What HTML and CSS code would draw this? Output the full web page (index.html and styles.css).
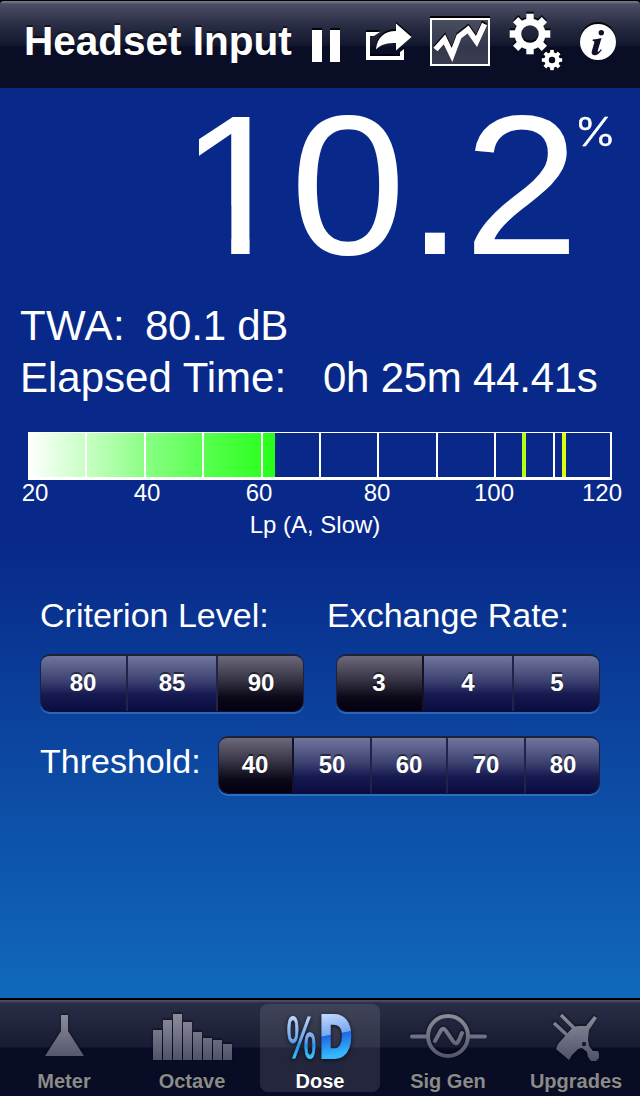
FILE: index.html
```html
<!DOCTYPE html>
<html lang="en">
<head>
<meta charset="utf-8">
<title>Headset Input</title>
<link rel="stylesheet" href="styles.css">
</head>
<body>
<div class="app">
  <header class="nav">
    <h1 class="title">Headset Input</h1>
    <svg class="tools" width="340" height="88" viewBox="300 0 340 88">
      <defs>
        <g id="teeth">
          <rect x="-3.7" y="-20.3" width="7.4" height="40.6"/>
          <rect x="-3.7" y="-20.3" width="7.4" height="40.6" transform="rotate(45)"/>
          <rect x="-3.7" y="-20.3" width="7.4" height="40.6" transform="rotate(90)"/>
          <rect x="-3.7" y="-20.3" width="7.4" height="40.6" transform="rotate(135)"/>
          <circle r="15.5"/>
        </g>
        <mask id="hole"><rect x="-22" y="-22" width="44" height="44" fill="#fff"/><circle r="8.7" fill="#000"/></mask>
        <mask id="hole2"><rect x="-22" y="-22" width="44" height="44" fill="#fff"/><circle r="6.4" fill="#000"/></mask>
        <linearGradient id="plot" x1="0" y1="0" x2="0" y2="1"><stop offset="0" stop-color="#4a4f60"/><stop offset=".6" stop-color="#35384c"/><stop offset="1" stop-color="#3a3b50"/></linearGradient>
      </defs>
      <g class="raised" fill="#fff">
        <path d="M312 30h10v32h-10zM330 30h10v32h-10z"/>
        <path d="M366 32h14l-6 4h-4v20h30v-4l4-3v11h-38z"/>
        <path d="M376 49.500C377 38 384 31 396 31v-7.500L411.500 37 396 50.500V43c-8 0-15 1-20 6.500z"/>
        <g transform="translate(530 34)"><g mask="url(#hole)"><use href="#teeth"/></g></g>
        <g transform="translate(552 60) scale(.5)"><g mask="url(#hole2)"><use href="#teeth"/></g></g>
        <circle cx="598" cy="42" r="18"/>
      </g>
      <path d="M430 16h60v2h-60z" fill="#000"/>
      <rect x="431" y="19" width="58" height="46" fill="url(#plot)" stroke="#fff" stroke-width="2"/>
      <path class="raised" d="M435.500 49.500L444.500 39.500 452 55 459 36.500 468 29.500 476.500 41.500 484.500 24" fill="none" stroke="#fff" stroke-width="5.500"/>
      <g fill="#0e1129"><circle cx="601.300" cy="32.800" r="2.700"/><path d="M592.800 39.600c2.800-.3 5.600-.8 8.700-1.600l-3.800 13c-.3 1.300.6 1.200 3.200-1.800l.9.800c-2.600 3.600-4.500 5.200-7 5.200-2.800 0-3.600-1.700-3-4l2.300-8c.5-1.800.2-2.300-1.500-2.300z"/></g>
    </svg>
  </header>

  <main class="content">
    <div class="reading"><span class="big"><span class="one">1</span>0.2</span><span class="unit">%</span></div>
    <div class="stats">
      <div class="row"><span class="twa">TWA:</span><span class="twav">80.1 dB</span></div>
      <div class="row"><span class="el">Elapsed Time:</span><span class="elv">0h 25m 44.41s</span></div>
    </div>
    <svg class="gauge" width="640" height="120" viewBox="0 430 640 120">
      <defs><linearGradient id="level"><stop offset="0" stop-color="#fff"/><stop offset=".25" stop-color="#c4ffc0"/><stop offset=".5" stop-color="#84ff7e"/><stop offset=".76" stop-color="#4fff46"/><stop offset="1" stop-color="#26ff19"/></linearGradient></defs>
      <rect x="28" y="432" width="247" height="46" fill="url(#level)"/>
      <path d="M28 432h584v1H28zM28 477h584v3H28zM85 432h2v46h-2zM144 432h2v46h-2zM202 432h2v46h-2zM261 432h2v46h-2zM319 432h2v46h-2zM377 432h2v46h-2zM436 432h2v46h-2zM494 432h2v46h-2zM553 432h2v46h-2zM610 432h2v46h-2zM28 432h1v46h-1z" fill="#fff"/>
      <path d="M522 433h4v44h-4z" fill="#b4ff12"/><path d="M562 433h4v44h-4z" fill="#deff0c"/>
      <g class="ticks"><text x="35" y="501">20</text><text x="147" y="501">40</text><text x="259" y="501">60</text><text x="377" y="501">80</text><text x="494" y="501">100</text><text x="602" y="501">120</text><text x="315" y="533">Lp (A, Slow)</text></g>
    </svg>
    <div class="settings">
      <section class="criterion"><h2>Criterion Level:</h2>
        <div class="seg seg3"><button>80</button><button>85</button><button class="on">90</button></div></section>
      <section class="exchange"><h2>Exchange Rate:</h2>
        <div class="seg seg3"><button class="on">3</button><button>4</button><button>5</button></div></section>
    </div>
    <section class="threshold"><h2>Threshold:</h2>
      <div class="seg seg5"><button class="on">40</button><button>50</button><button>60</button><button>70</button><button>80</button></div></section>
  </main>

  <nav class="tabs">
    <svg width="0" height="0" class="defs"><defs>
      <linearGradient id="metal" gradientUnits="userSpaceOnUse" x1="0" y1="10" x2="0" y2="60"><stop offset="0" stop-color="#92929f"/><stop offset="1" stop-color="#50526a"/></linearGradient>
      <linearGradient id="ice" gradientUnits="userSpaceOnUse" x1="0" y1="-44" x2="6" y2="0"><stop offset="0" stop-color="#c6dcff"/><stop offset=".52" stop-color="#78a8f0"/><stop offset=".54" stop-color="#1e66e8"/><stop offset="1" stop-color="#35b8fb"/></linearGradient>
      <linearGradient id="ice2" gradientUnits="userSpaceOnUse" x1="0" y1="-44" x2="0" y2="0"><stop offset="0" stop-color="#c6dcff"/><stop offset=".6" stop-color="#6ba5ee"/><stop offset=".72" stop-color="#2494f0"/><stop offset="1" stop-color="#3cc2fb"/></linearGradient>
    </defs></svg>
    <a class="tab"><svg width="120" height="62" viewBox="4 0 120 62"><path d="M61 15h7v16l16 25H45l16-25z" fill="url(#metal)"/></svg><span>Meter</span></a>
    <a class="tab"><svg width="120" height="62" viewBox="132 0 120 62"><path d="M153 30h9v30h-9zM163 20h9v40h-9zM173 14h9v46h-9zM183 22h9v38h-9zM193 32h9v28h-9zM203 38h9v22h-9zM213 40h9v20h-9zM223 44h9v16h-9z" fill="url(#metal)"/></svg><span>Octave</span></a>
    <a class="tab active"><svg width="120" height="62" viewBox="260 0 120 62"><g transform="translate(286.500 57.500) scale(.56 1)"><text class="pct">%</text></g><g transform="translate(320 57) scale(.73 1)"><text class="dee">D</text></g></svg><span>Dose</span></a>
    <a class="tab"><svg width="120" height="62" viewBox="388 0 120 62"><g fill="none" stroke="url(#metal)" stroke-width="4" stroke-linecap="round"><circle cx="448" cy="36" r="20"/><path d="M412 36.500h16M469 36.600h16"/><path d="M435 41l5-9q3-6 6-1l7 10q3 5 6-1l3-7"/></g></svg><span>Sig Gen</span></a>
    <a class="tab"><svg width="120" height="62" viewBox="516 0 120 62"><g fill="none" stroke="url(#metal)" stroke-width="3.500"><path d="M561 15l14 14M554 23l14 13"/></g><path d="M573 27l5-1h8l8-10 3 2-8 12-1 9 1 7 4 5 5 0 1 3v4l-3 3h-5l-3-4-1-5-5-4-4 1-6 6-3 5-13-11 2-5z" fill="url(#metal)"/><circle cx="584" cy="44" r="2.200" fill="#171a30"/></svg><span>Upgrades</span></a>
  </nav>
</div>
</body>
</html>
```
FILE: styles.css
```css
* { box-sizing: border-box; }
body { margin: 0; background: #000; }
.app { width: 640px; height: 1096px; display: flex; flex-direction: column; font-family: "Liberation Sans", Arial, sans-serif; color: #fff; overflow: hidden; }

.nav { height: 88px; flex: none; display: flex; border-top: 1px solid #000; border-radius: 4px 4px 0 0;
  background: linear-gradient(#73748b 0 1px, #4c4d66 3px, #282c42 25px, #14182f 44px, #090d25 46px, #090d25 100%); }
.title { margin: 0; width: 300px; flex: none; padding: 17px 0 0 24px; font-size: 40.5px; line-height: 46px; white-space: nowrap; text-shadow: 0 -2px 0 rgba(0,0,0,.5); }
.tools { display: block; margin-top: -1px; }
.raised { filter: drop-shadow(0 -2px 0 rgba(0,0,0,.85)); }

.content { height: 910px; flex: none; background: linear-gradient(#082989 0, #082989 455px, #1069bd 100%); display: flex; flex-direction: column; }
.reading { height: 208px; display: flex; justify-content: flex-end; align-items: flex-start; }
.big { font-size: 198px; line-height: 200px; height: 200px; margin-top: -2px; transform: scaleX(1.05); transform-origin: right; white-space: nowrap; }
.one { display: inline-block; line-height: 1; margin-right: -4px; clip-path: polygon(0 0, .34em 0, .34em 1em, .2515em 1em, .2515em .6em, 0 .6em); }
.unit { font-family: Inter, sans-serif; font-weight: 300; font-size: 39px; line-height: 48px; width: 61px; padding-top: 20px; text-indent: -4px; -webkit-text-stroke: .5px #fff; transform: scaleX(1.14); transform-origin: left; }

.stats { height: 134px; padding: 4px 0 0 20px; font-size: 42px; line-height: 52px; }
.row { display: flex; height: 52px; white-space: pre; }
.twa { width: 125px; letter-spacing: .4px; }
.twav, .elv { letter-spacing: -.25px; }
.el { width: 303px; }
.gauge { display: block; flex: none; }
.ticks { font-size: 24px; fill: #fff; text-anchor: middle; }

.settings { display: flex; gap: 32px; padding-left: 40px; height: 186px; padding-top: 45px; }
h2 { margin: 0; font-weight: 400; font-size: 34px; line-height: 40px; white-space: nowrap; }
.settings h2 { height: 59px; }
.criterion h2 { margin-left: 0; }
.exchange h2 { margin-left: -9px; }
.threshold { display: flex; padding-left: 40px; }
.threshold h2 { width: 178px; padding-top: 5px; }
.seg { display: grid; height: 58px; border-radius: 10px; overflow: hidden; border: 1px solid #1d2140; border-top: 2px solid #202135; border-bottom-color: #0a0e35; box-shadow: 0 2px 0 0 rgba(75,145,210,.5); }
.seg3 { width: 264px; grid-template-columns: 87px 90px 1fr; }
.seg5 { width: 382px; grid-template-columns: 75px 78px 76px 78px 1fr; }
.seg button { border: 0; border-right: 2px solid #20234a; margin: 0; padding: 0 0 1px 0; color: #fff; font: bold 24px "Liberation Sans", Arial, sans-serif; text-shadow: 0 -2px 0 rgba(0,0,0,.5); background: linear-gradient(#71769e, #3d4170 45%, #171a50 70%, #0a0c41); }
.seg button:first-child { padding-right: 1px; }
.seg button:last-child { border-right: 0; padding-left: 1px; }
.seg .on { border-right-color: #131326; background: linear-gradient(#6c6a7a, #373546 42%, #0b0818 75%, #030011); }

.tabs { height: 98px; flex: none; display: flex; gap: 8px; padding: 4px 4px 4px; border-top: 2px solid #000; position: relative;
  background: linear-gradient(#4b4d63 0 1px, #292d45 3px, #171b33 47px, #080c24 48px, #080c24 100%); }
.defs { position: absolute; }
.tab { width: 120px; flex: none; height: 88px; display: flex; flex-direction: column; align-items: center; border-radius: 8px; color: #8b8b89; font-weight: bold; font-size: 20px; line-height: 24px; text-shadow: 0 -1px 0 rgba(0,0,0,.5); }
.tab svg { display: block; margin-top: -4px; height: 62px; flex: none; overflow: visible; filter: drop-shadow(0 -1px 1px rgba(0,0,0,.6)); }
.tab span { margin-top: 7px; }
.tab.active { background: rgba(255,255,255,.11); color: #fff; }
.tab.active svg { filter: drop-shadow(0 1px 2px rgba(0,0,0,.7)); }
.pct, .dee { text-shadow: none; }
.pct { font-size: 60px; font-weight: 400; fill: url(#ice2); stroke: url(#ice2); stroke-width: 1px; }
.dee { font-size: 60px; font-weight: 700; fill: url(#ice); stroke: url(#ice); stroke-width: 4px; }
```
